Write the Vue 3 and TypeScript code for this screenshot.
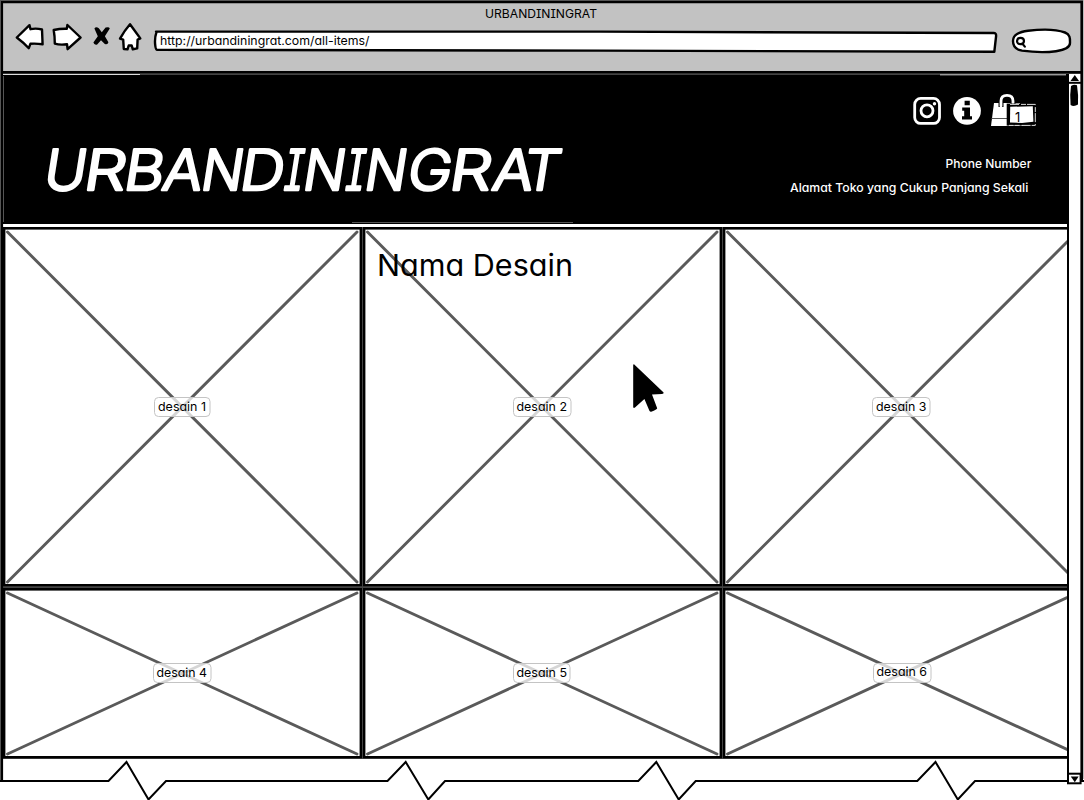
<script setup lang="ts">
interface Design {
  name: string
  labelX: number
  labelWidth: number
  labelY: number
  textX: number
  textWidth: number
  baseline: number
  left: number
  top: number
  height: number
  caption?: string
}

interface BrandLetter {
  char: string
  x: number
  width: number
}

const brand: BrandLetter[] = [
  { char: 'U', x: 42, width: 42 },
  { char: 'R', x: 82, width: 42 },
  { char: 'B', x: 122, width: 40 },
  { char: 'A', x: 160.5, width: 40 },
  { char: 'N', x: 199, width: 42 },
  { char: 'D', x: 238, width: 44 },
  { char: 'I', x: 282.5, width: 18 },
  { char: 'N', x: 301, width: 42 },
  { char: 'I', x: 344, width: 18 },
  { char: 'N', x: 362.5, width: 42 },
  { char: 'G', x: 405.5, width: 44 },
  { char: 'R', x: 447.5, width: 42 },
  { char: 'A', x: 490.5, width: 41 },
  { char: 'T', x: 521, width: 37 },
]

const designs: Design[] = [
  { name: 'desain 1', left: 3, top: 227, height: 360, labelX: 154, labelWidth: 56, labelY: 397, textX: 158, textWidth: 48, baseline: 411 },
  { name: 'desain 2', left: 363, top: 227, height: 360, labelX: 513, labelWidth: 58, labelY: 397, textX: 516.5, textWidth: 50.5, baseline: 411, caption: 'Nama Desain' },
  { name: 'desain 3', left: 723, top: 227, height: 360, labelX: 872, labelWidth: 58, labelY: 397, textX: 876, textWidth: 50.5, baseline: 411 },
  { name: 'desain 4', left: 3, top: 588, height: 171, labelX: 153, labelWidth: 58, labelY: 663, textX: 156.5, textWidth: 50.5, baseline: 677 },
  { name: 'desain 5', left: 363, top: 588, height: 171, labelX: 513, labelWidth: 57, labelY: 663, textX: 516.5, textWidth: 50.5, baseline: 677 },
  { name: 'desain 6', left: 723, top: 588, height: 171, labelX: 873, labelWidth: 58, labelY: 663, textX: 876.5, textWidth: 50.5, baseline: 676 },
]
</script>

<template>
  <div class="window">
    <div class="chrome">
      <svg class="titlebar" width="1084" height="21" viewBox="0 0 1084 21">
        <text class="small" x="485" y="17.6" textLength="112" lengthAdjust="spacingAndGlyphs">URBANDININGRAT</text>
      </svg>
      <div class="toolbar">
        <svg class="ink" width="34" height="34" viewBox="14 21 34 34">
          <path d="M16.8 37.5 29.5 25.2 30.5 29.2Q36 28 42 29.5L42.6 44.2Q36 43.4 30.4 43.8L28.8 48.2Q24 43 16.8 37.5Z" />
        </svg>
        <svg class="ink" width="42" height="34" viewBox="48 21 42 34">
          <path d="M53.7 30Q60 28.6 66.8 28.8L67.4 25 80.6 37.5 67.6 49.2 67 44.2Q60 45.2 54.8 43.6Q54.8 36 53.7 30Z" />
        </svg>
        <svg width="26" height="34" viewBox="90 21 26 34">
          <path d="M94.4 28.5Q96 26.2 98.8 28.2L101.8 32.2 105.6 27.6Q109 26.4 109.8 28.4L104.9 36.2 108.4 42.2Q107.8 45.2 104.8 44L101 40.2 97.2 44.5Q94.2 45.4 93.4 42.6L97.8 36.2Z" />
        </svg>
        <svg class="ink" width="32" height="34" viewBox="116 21 32 34">
          <path d="M130 24.2Q135 31 140.3 38.4L137.6 39.6 137.2 48.4 132.8 49.3 131.7 45.5H128.7L127.5 49.3 123.8 49 123.2 39.6 120 38.6Q124.5 30.5 130 24.2Z" />
        </svg>
        <svg class="ink" width="856" height="34" viewBox="148 21 856 34">
          <path d="M156 31.6 H600 L994 33 Q996.6 33 996 37 L994.3 51.8 600 50.6 157 49.8 Q155.6 49.6 155.2 45 Q154.4 38 156.6 31.6Z" />
          <text class="small" x="160" y="45" textLength="209.5" lengthAdjust="spacingAndGlyphs">http://urbandiningrat.com/all-items/</text>
        </svg>
        <svg class="ink" width="74" height="34" viewBox="1004 21 74 34">
          <path d="M1013 41C1013 34 1020 32 1028 30.8C1042 29 1057 29.6 1065 32.5C1070.5 34.5 1070 39 1070 43C1070 48 1064 50 1056 51.2C1044 52.8 1032 52 1022 50.6C1015 49.4 1013 46 1013 41Z" />
          <path class="lens" d="M1024 41C1023.8 45.2 1017.2 45.2 1017 41.2C1017.2 36.8 1023.8 37 1024 41ZM1022.4 43.6L1024.8 46.6" />
        </svg>
      </div>
    </div>

    <div class="viewport">
      <main>
        <header>
          <svg width="760" height="149" viewBox="0 75 760 149">
            <g transform="translate(0 190) skewX(-9)">
              <text class="brand" y="0"><tspan
                v-for="(letter, i) in brand"
                :key="i"
                :x="letter.x"
                :textLength="letter.width"
                lengthAdjust="spacingAndGlyphs"
              >{{ letter.char }}</tspan></text>
            </g>
          </svg>
          <div class="contact">
            <svg width="307" height="60" viewBox="760 75 307 60">
              <g class="glyph">
                <rect x="914.7" y="98.4" width="24.8" height="25" rx="6" />
                <circle cx="927" cy="110.8" r="6" />
              </g>
              <circle class="white" cx="934.5" cy="103.7" r="1.7" />
              <circle class="white" cx="967" cy="110.8" r="13.9" />
              <path d="M963 107.4H970V116.2H972V119.6H962V116.2H964.2V110.7H962.2V107.4ZM964.6 100.8H969.8V105.2H964.6Z" />
              <path class="white" d="M994 103H1020L1023 126H991Z" />
              <path class="seam" d="M991.5 118.5H1022" />
              <path class="handle-back" d="M1001 107V101Q1001 95.3 1007 95.3T1013 101V107" />
              <path class="handle" d="M1001 106V101Q1001 95.3 1007 95.3T1013 101V106" />
              <rect x="1006.7" y="103.6" width="30" height="22" />
              <path class="badge-edge" d="M1010 104.4H1035.3V125.4H1009" />
              <path class="white" d="M1010.2 106.8 1032.8 106.2 1033.4 121.8 1022 123 1010 122.4Z" />
              <text class="badge-count" x="1015" y="122">1</text>
            </svg>
            <svg width="307" height="89" viewBox="760 135 307 89">
              <text class="address" x="945.5" y="167.6" textLength="85.8" lengthAdjust="spacingAndGlyphs">Phone Number</text>
              <text class="address" x="790" y="191.6" textLength="238.3" lengthAdjust="spacingAndGlyphs">Alamat Toko yang Cukup Panjang Sekali</text>
            </svg>
          </div>
        </header>
        <section class="gallery">
          <svg
            v-for="d in designs"
            :key="d.name"
            width="359"
            :height="d.height"
            :viewBox="`${d.left} ${d.top} 359 ${d.height}`"
          >
            <rect class="card" :x="d.left + 1" :y="d.top + 1.2" width="357" :height="d.height - 2.8" />
            <path
              class="cross"
              :d="`M${d.left + 4.5} ${d.top + 5}L${d.left + 354} ${d.top + d.height - 5}M${d.left + 354} ${d.top + 5}L${d.left + 4.5} ${d.top + d.height - 5}`"
            />
            <rect class="label" :x="d.labelX + 0.5" :y="d.labelY + 0.5" :width="d.labelWidth - 0.5" height="19" rx="4" />
            <text class="small" :x="d.textX" :y="d.baseline" :textLength="d.textWidth" lengthAdjust="spacingAndGlyphs">{{ d.name }}</text>
            <template v-if="d.caption">
              <text class="caption" x="377" y="275.6" textLength="196" lengthAdjust="spacingAndGlyphs">{{ d.caption }}</text>
              <path d="M634 364.2 663.6 392.6Q664 394 662 394.1L652 394.6 657.2 408.2Q657 409.6 651.2 411.8Q650 412 649.4 410.8L644.4 399 635 407.6Q633.4 408.4 633.2 407V365Q633.4 364 634 364.2Z" />
            </template>
          </svg>
        </section>
      </main>
      <svg class="scrollbar" width="17" height="726" viewBox="1067 74 17 726">
        <path class="rail" d="M1068 74V784" />
        <path class="rail" d="M1067 82.8H1081" />
        <path d="M1074.8 75 1079 81H1070.5Z" />
        <path d="M1071 86Q1074 84 1077 85.2Q1078.6 95 1078 104.5Q1074 107 1070.6 105Q1069.6 95 1071 86Z" />
      </svg>
    </div>

    <svg class="frame" width="1084" height="800" viewBox="0 0 1084 800">
      <path class="border" d="M1.8 781V2H1081.7V781" />
      <path class="shade" d="M0 .5H1084M.5 0V781" />
      <path class="edge" d="M1083.5 0V779" />
      <path class="border" d="M2 72.4H1082" />
      <path class="hair light" d="M3 74.5H140M940 74.8H1066" />
      <path class="hair mid" d="M140 74.5H940" />
      <path class="hair dim" d="M3.5 76V222M352 222.5H573" />
      <path class="tear" d="M0 781H108.5L126.5 762 148.5 799.5 166 781H387.5L405.7 762 428.3 799.5 445 781H638.3L656.3 762 678.7 799.5 695.7 781H917.3L935.5 762 957.8 799.5 975 781H1084" />
      <rect class="button" x="1068" y="773.7" width="12.6" height="9.6" />
      <path d="M1070.8 776.6H1078.6L1074.8 782.3Z" />
    </svg>
  </div>
</template>

<style>
body {
  margin: 0;
  overflow: hidden;
  background: #fff;
}
</style>

<style scoped>
.window {
  position: relative;
  display: flex;
  flex-direction: column;
  width: 1084px;
  height: 800px;
  overflow: hidden;
  background: #fff;
}
svg {
  display: block;
  flex: none;
}
text {
  font-family: Inter, "Open Sans", sans-serif;
  font-feature-settings: "cv11", "cv08";
  fill: #000;
  stroke: none;
}
.small {
  font-size: 12px;
}
.badge-count {
  font-size: 13px;
}
.chrome {
  height: 74px;
  background: #c2c2c2;
}
.toolbar {
  display: flex;
  padding-left: 14px;
}
.ink path {
  fill: #fff;
  stroke: #000;
  stroke-width: 2.4;
  stroke-linejoin: round;
}
.ink .lens {
  stroke-width: 2.2;
  stroke-linecap: round;
}
.viewport {
  display: flex;
  height: 726px;
}
main {
  width: 1067px;
  overflow: hidden;
}
header {
  display: flex;
  justify-content: space-between;
  height: 150px;
  padding-top: 1px;
  box-sizing: border-box;
  background: #000;
}
.brand {
  font-size: 56px;
  font-weight: 300;
  fill: #fff;
  stroke: #fff;
  stroke-width: 2.6;
  stroke-linejoin: round;
}
.address {
  font-size: 12px;
  font-weight: 500;
  fill: #fff;
}
.white {
  fill: #fff;
}
.glyph {
  fill: none;
  stroke: #fff;
  stroke-width: 2.8;
}
.seam {
  stroke: #555;
}
.handle-back {
  fill: none;
  stroke: #000;
  stroke-width: 5;
}
.handle {
  fill: none;
  stroke: #fff;
  stroke-width: 2.8;
  stroke-linecap: round;
}
.badge-edge {
  fill: none;
  stroke: #ddd;
  stroke-dasharray: 9 2 5 1;
}
.gallery {
  display: grid;
  grid-template-columns: repeat(3, 359px);
  gap: 1px;
  width: 1079px;
  padding: 3px 0 0 3px;
}
.gallery svg {
  background: #fff;
  box-shadow: 1px 0 #444;
}
.gallery svg:nth-child(-n + 3) {
  box-shadow: 1px 0 #444, 0 1px #444, 1px 1px #444;
}
.card {
  fill: #fff;
  stroke: #000;
  stroke-width: 2.8;
}
.cross {
  fill: none;
  stroke: #5a5a5a;
  stroke-width: 2.9;
  stroke-linecap: round;
}
.label {
  fill: #fff;
  fill-opacity: 0.75;
  stroke: #c4c4c4;
}
.caption {
  font-size: 30px;
}
.rail {
  stroke: #000;
  stroke-width: 2;
}
.frame {
  position: absolute;
  inset: 0;
}
.frame path[class] {
  fill: none;
}
.border {
  stroke: #000;
  stroke-width: 2.6;
}
.shade {
  stroke: #555;
}
.edge {
  stroke: #bbb;
}
.hair {
  stroke-width: 1;
}
.light {
  stroke: #ddd;
}
.mid {
  stroke: #444;
}
.dim {
  stroke: #555;
}
.tear {
  stroke: #000;
  stroke-width: 2;
}
.button {
  fill: #fff;
  stroke: #000;
  stroke-width: 2;
}
</style>
